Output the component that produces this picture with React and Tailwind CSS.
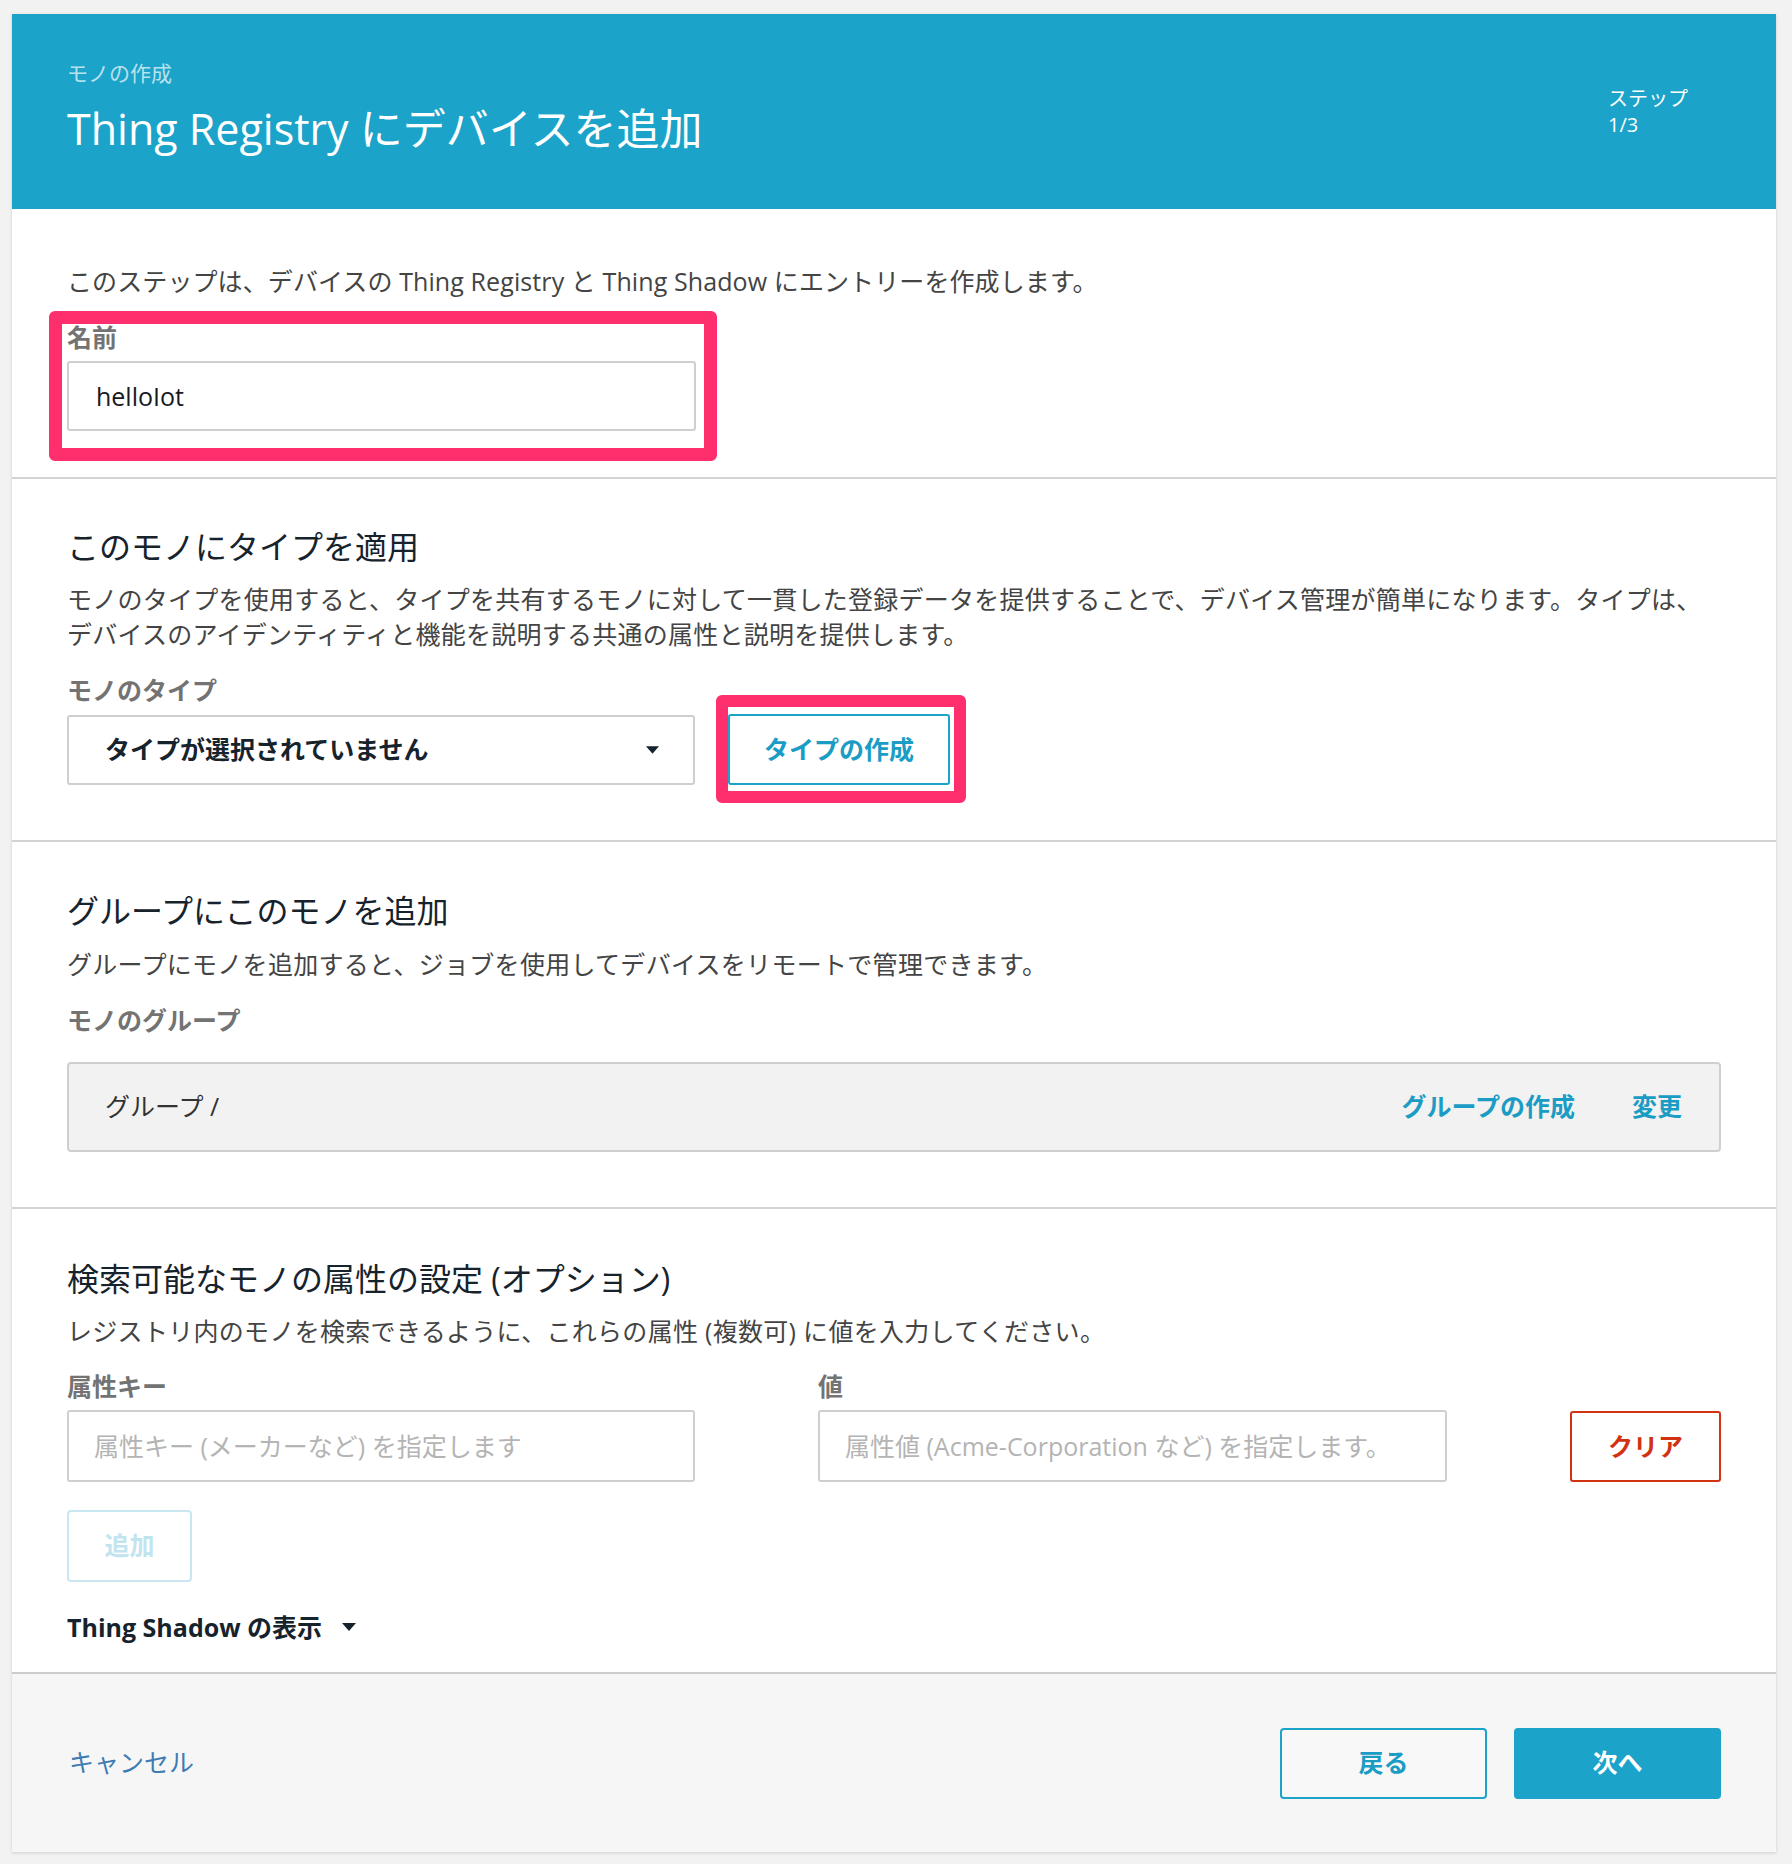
import React from "react";

const font = "font-['Open_Sans','Noto_Sans_CJK_JP',sans-serif]";

const Heading = ({ children }) => (
  <h2 className="text-[32px] leading-[40px] text-[#16232c] font-normal">{children}</h2>
);

const Label = ({ children, className = "" }) => (
  <div className={`text-[25px] leading-[26px] font-bold text-[#737373] ${className}`}>{children}</div>
);

const Caret = ({ className = "" }) => (
  <svg viewBox="0 0 14 8" className={className} fill="currentColor">
    <path d="M0 0h14L7 8z" />
  </svg>
);

export default function App() {
  return (
    <div className={`min-h-[1864px] bg-[#f2f2f2] pl-[12px] pr-[16px] pt-[14px] pb-[12px] ${font}`}>
      <div className="bg-white shadow-[0_1px_3px_rgba(0,0,0,0.15)]">
        {/* header */}
        <div className="h-[195px] bg-[#1ba3c9] flex justify-between pl-[55px]">
          <div className="pt-[45px]">
            <div className="text-[21px] leading-[28px] text-white/70">モノの作成</div>
            <h1 className="mt-[16px] text-[43px] leading-[52px] text-white font-normal">
              Thing Registry にデバイスを追加
            </h1>
          </div>
          <div className="w-[113px] mr-[55px] pt-[72px] text-[20px] leading-[26px] text-white">
            <div>ステップ</div>
            <div>1/3</div>
          </div>
        </div>

        {/* name */}
        <div className="px-[55px] pt-[57px] pb-[16px]">
          <p className="text-[25px] leading-[30px] tracking-[0.1px] text-[#444]">
            このステップは、デバイスの Thing Registry と Thing Shadow にエントリーを作成します。
          </p>
          <div className="mt-[15px] -ml-[18px] w-[668px] border-[13px] border-[#fe2f6c] rounded-[6px] pl-[5px] pr-[8px] pb-[17px]">
            <Label>名前</Label>
            <input
              defaultValue="helloIot"
              className="mt-[11px] w-[629px] h-[70px] border-2 border-[#cfcfcf] rounded-[3px] px-[27px] text-[25px] text-[#16191f] outline-none"
            />
          </div>
        </div>

        {/* type */}
        <div className="border-t-2 border-[#d3d3d3] px-[55px] pt-[48px] pb-[37px]">
          <Heading>このモノにタイプを適用</Heading>
          <p className="mt-[15px] text-[25px] leading-[35px] tracking-[0.25px] text-[#444]">
            モノのタイプを使用すると、タイプを共有するモノに対して一貫した登録データを提供することで、デバイス管理が簡単になります。タイプは、
            <br />
            デバイスのアイデンティティと機能を説明する共通の属性と説明を提供します。
          </p>
          <div className="mt-[25px] flex items-start">
            <div className="w-[628px]">
              <Label>モノのタイプ</Label>
              <div className="mt-[12px] h-[70px] border-2 border-[#cfcfcf] rounded-[3px] flex items-center justify-between pl-[36px] pr-[34px]">
                <span className="text-[25px] font-bold text-[#16232c]">タイプが選択されていません</span>
                <Caret className="w-[13px] h-[8px] text-[#16232c]" />
              </div>
            </div>
            <div className="ml-[21px] mt-[18px] w-[250px] h-[108px] border-[12px] border-[#fe2f6c] rounded-[6px] pt-[7px] pr-[4px]">
              <button className="w-[222px] h-[71px] border-2 border-[#1ba3c9] rounded-[3px] bg-white text-[25px] font-bold text-[#1a9cc4]">
                タイプの作成
              </button>
            </div>
          </div>
        </div>

        {/* group */}
        <div className="border-t-2 border-[#d3d3d3] px-[55px] pt-[49px] pb-[55px]">
          <Heading>グループにこのモノを追加</Heading>
          <p className="mt-[18px] text-[25px] leading-[30px] tracking-[0.3px] text-[#444]">
            グループにモノを追加すると、ジョブを使用してデバイスをリモートで管理できます。
          </p>
          <Label className="mt-[28px]">モノのグループ</Label>
          <div className="mt-[29px] h-[90px] bg-[#f2f2f2] border-2 border-[#cfcfcf] rounded-[4px] flex items-center pl-[36px] pr-[37px]">
            <span className="text-[25px] text-[#333]">グループ /</span>
            <span className="ml-auto text-[25px] font-bold text-[#1a9cc4]">グループの作成</span>
            <span className="ml-[57px] text-[25px] font-bold text-[#1a9cc4]">変更</span>
          </div>
        </div>

        {/* attributes */}
        <div className="border-t-2 border-[#d3d3d3] px-[55px] pt-[50px] pb-[30px]">
          <Heading>検索可能なモノの属性の設定 (オプション)</Heading>
          <p className="mt-[17px] text-[25px] leading-[30px] tracking-[0.3px] text-[#444]">
            レジストリ内のモノを検索できるように、これらの属性 (複数可) に値を入力してください。
          </p>
          <div className="mt-[27px] flex items-end">
            <div className="w-[628px]">
              <Label>属性キー</Label>
              <input
                placeholder="属性キー (メーカーなど) を指定します"
                className="mt-[11px] w-full h-[72px] border-2 border-[#cfcfcf] rounded-[3px] px-[25px] text-[25px] outline-none placeholder:text-[#b4b4b4]"
              />
            </div>
            <div className="ml-[123px] w-[629px]">
              <Label>値</Label>
              <input
                placeholder="属性値 (Acme-Corporation など) を指定します。"
                className="mt-[11px] w-full h-[72px] border-2 border-[#cfcfcf] rounded-[3px] px-[25px] text-[25px] outline-none placeholder:text-[#b4b4b4]"
              />
            </div>
            <button className="ml-auto w-[151px] h-[71px] border-2 border-[#d13212] rounded-[3px] bg-white text-[25px] font-bold text-[#d13212]">
              クリア
            </button>
          </div>
          <button className="mt-[28px] w-[125px] h-[72px] border-2 border-[#c8e7f1] rounded-[4px] bg-white text-[25px] font-bold text-[#c2e4ef]">
            追加
          </button>
          <div className="mt-[30px] flex items-center text-[25px] leading-[30px] font-bold text-[#16232c]">
            <span>Thing Shadow の表示</span>
            <Caret className="ml-[20px] w-[14px] h-[8px]" />
          </div>
        </div>

        {/* footer */}
        <div className="border-t-2 border-[#cccccc] bg-[#f6f6f6] h-[180px] flex items-center pl-[57px] pr-[55px]">
          <span className="text-[25px] text-[#3d7bb3]">キャンセル</span>
          <div className="ml-auto flex gap-[27px]">
            <button className="w-[207px] h-[71px] border-2 border-[#1ba3c9] rounded-[4px] bg-[#f8f8f8] text-[25px] font-bold text-[#1a9cc4]">
              戻る
            </button>
            <button className="w-[207px] h-[71px] rounded-[4px] bg-[#1ba3c9] text-[25px] font-bold text-white">
              次へ
            </button>
          </div>
        </div>
      </div>
    </div>
  );
}
